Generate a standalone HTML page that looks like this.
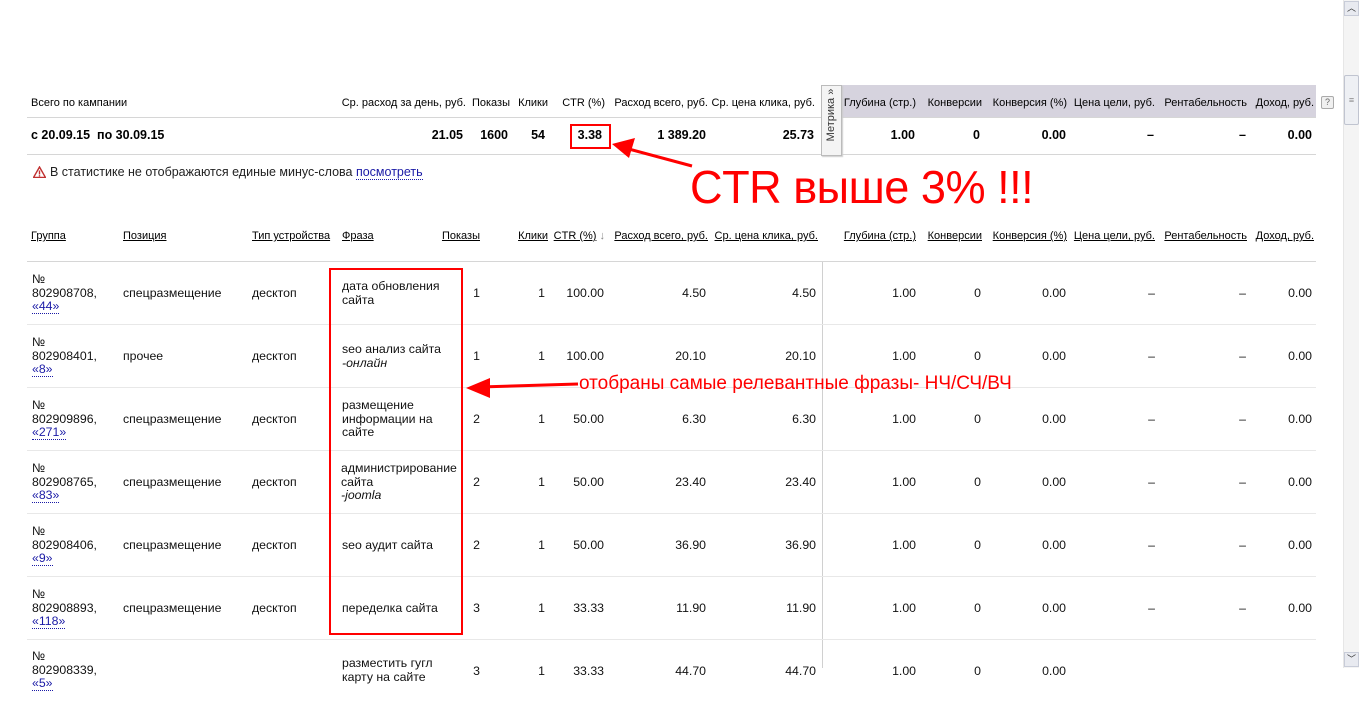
<!DOCTYPE html>
<html><head><meta charset="utf-8"><style>
*{margin:0;padding:0;box-sizing:border-box}
body{width:1359px;height:668px;overflow:hidden;background:#fff;font-family:"Liberation Sans",Arial,sans-serif;font-size:11px;color:#000;position:relative}
.a{position:absolute;white-space:nowrap}
.r{position:absolute;white-space:nowrap;text-align:right}
.hl{position:absolute;left:27px;width:1289px;height:1px;background:#d6d6d6}
.u{text-decoration:underline}
.lnk{color:#1a1aa6;border-bottom:1px dotted #1a1aa6}
.row{position:absolute;left:0;width:1359px;height:63px;font-size:12.3px;color:#111}
.row .c{position:absolute;top:0;height:63px;display:flex;align-items:center;white-space:nowrap;line-height:13.5px}
.row .n{justify-content:flex-end}
.sep{position:absolute;left:27px;width:1289px;height:1px;background:#e8e8e8;bottom:0}
</style></head><body>

<div class="a" style="left:1343px;top:0;width:16px;height:668px;background:#f4f4f4;border-left:1px solid #e6e6e6"></div>
<div class="a" style="left:1344px;top:1px;width:15px;height:15px;background:#e8eaf0;border:1px solid #c8ccd8;font-size:9px;text-align:center;line-height:13px;color:#333">︿</div>
<div class="a" style="left:1344px;top:75px;width:15px;height:50px;background:#eef0f4;border:1px solid #c0c4d0;border-radius:2px;font-size:9px;text-align:center;line-height:48px;color:#888">≡</div>
<div class="a" style="left:1344px;top:652px;width:15px;height:15px;background:#e8eaf0;border:1px solid #c8ccd8;font-size:9px;text-align:center;line-height:13px;color:#333">﹀</div>

<div class="a" style="left:838px;top:85px;width:478px;height:32px;background:#d6d3de"></div>
<div class="a" style="left:31px;top:97px">Всего по кампании</div>
<div class="r" style="right:893px;top:97px">Ср. расход за день, руб.</div>
<div class="r" style="right:849px;top:97px">Показы</div>
<div class="r" style="right:811px;top:97px">Клики</div>
<div class="r" style="right:754px;top:97px">CTR (%)</div>
<div class="r" style="right:651px;top:97px">Расход всего, руб.</div>
<div class="r" style="right:544px;top:97px">Ср. цена клика, руб.</div>
<div class="r" style="right:443px;top:97px">Глубина (стр.)</div>
<div class="r" style="right:377px;top:97px">Конверсии</div>
<div class="r" style="right:292px;top:97px">Конверсия (%)</div>
<div class="r" style="right:204px;top:97px">Цена цели, руб.</div>
<div class="r" style="right:112px;top:97px">Рентабельность</div>
<div class="r" style="right:45px;top:97px">Доход, руб.</div>
<div class="a" style="left:1321px;top:96px;width:13px;height:13px;border:1px solid #aaa;border-radius:2px;background:#f0f0f0;font-size:9px;line-height:11px;text-align:center;color:#666">?</div>
<div class="hl" style="top:117px"></div>
<div class="hl" style="top:154px"></div>
<div class="a" style="left:821px;top:85px;width:21px;height:71px;background:#f4f4f4;border:1px solid #bbb;box-shadow:1px 1px 1px #ccc"></div>
<div class="a" style="left:822px;top:150px;width:70px;transform-origin:0 0;transform:rotate(-90deg);font-size:11px;line-height:19px;text-align:center;color:#333">Метрика »</div>

<div class="a" style="left:31px;top:128px;font-weight:bold;font-size:12.5px">с 20.09.15&nbsp; по 30.09.15</div>
<div style="font-weight:bold;font-size:12.5px">
<div class="r" style="right:896px;top:128px">21.05</div>
<div class="r" style="right:851px;top:128px">1600</div>
<div class="r" style="right:814px;top:128px">54</div>
<div class="r" style="right:757px;top:128px">3.38</div>
<div class="r" style="right:653px;top:128px">1 389.20</div>
<div class="r" style="right:545px;top:128px">25.73</div>
<div class="r" style="right:444px;top:128px">1.00</div>
<div class="r" style="right:379px;top:128px">0</div>
<div class="r" style="right:293px;top:128px">0.00</div>
<div class="r" style="right:205px;top:128px">–</div>
<div class="r" style="right:113px;top:128px">–</div>
<div class="r" style="right:47px;top:128px">0.00</div>
</div>

<svg class="a" style="left:33px;top:166px" width="13" height="12"><polygon points="6.5,1 12.5,11.5 0.5,11.5" fill="#fff" stroke="#c03030" stroke-width="1.4"/><rect x="5.8" y="4.5" width="1.4" height="4" fill="#c03030"/><rect x="5.8" y="9.2" width="1.4" height="1.3" fill="#c03030"/></svg>
<div class="a" style="left:50px;top:165px;font-size:12.5px;color:#222">В статистике не отображаются единые минус-слова <span class="lnk">посмотреть</span></div>

<div class="a u" style="left:31px;top:230px">Группа</div>
<div class="a u" style="left:123px;top:230px">Позиция</div>
<div class="a u" style="left:252px;top:230px">Тип устройства</div>
<div class="a u" style="left:342px;top:230px">Фраза</div>
<div class="r u" style="right:879px;top:230px">Показы</div>
<div class="r u" style="right:811px;top:230px">Клики</div>
<div class="r" style="right:754px;top:230px"><span class="u">CTR (%)</span> <span style="color:#888">↓</span></div>
<div class="r u" style="right:651px;top:230px">Расход всего, руб.</div>
<div class="r u" style="right:541px;top:230px">Ср. цена клика, руб.</div>
<div class="r u" style="right:443px;top:230px">Глубина (стр.)</div>
<div class="r u" style="right:377px;top:230px">Конверсии</div>
<div class="r u" style="right:292px;top:230px">Конверсия (%)</div>
<div class="r u" style="right:204px;top:230px">Цена цели, руб.</div>
<div class="r u" style="right:112px;top:230px">Рентабельность</div>
<div class="r u" style="right:45px;top:230px">Доход, руб.</div>
<div class="hl" style="top:261px"></div>
<div class="a" style="left:822px;top:262px;width:1px;height:406px;background:#d0d0d0"></div>

<div class="row" style="top:262px"><div class="sep"></div>
<div class="c" style="left:32px"><div>№<br>802908708,<br><span class="lnk">«44»</span></div></div>
<div class="c" style="left:123px">спецразмещение</div><div class="c" style="left:252px">десктоп</div>
<div class="c" style="left:342px"><div>дата обновления<br>сайта</div></div>
<div class="c n" style="right:879px">1</div><div class="c n" style="right:814px">1</div><div class="c n" style="right:755px">100.00</div><div class="c n" style="right:653px">4.50</div><div class="c n" style="right:543px">4.50</div><div class="c n" style="right:443px">1.00</div><div class="c n" style="right:378px">0</div><div class="c n" style="right:293px">0.00</div><div class="c n" style="right:204px">–</div><div class="c n" style="right:113px">–</div><div class="c n" style="right:47px">0.00</div></div>

<div class="row" style="top:325px"><div class="sep"></div>
<div class="c" style="left:32px"><div>№<br>802908401,<br><span class="lnk">«8»</span></div></div>
<div class="c" style="left:123px">прочее</div><div class="c" style="left:252px">десктоп</div>
<div class="c" style="left:342px"><div>seo анализ сайта<br><i>-онлайн</i></div></div>
<div class="c n" style="right:879px">1</div><div class="c n" style="right:814px">1</div><div class="c n" style="right:755px">100.00</div><div class="c n" style="right:653px">20.10</div><div class="c n" style="right:543px">20.10</div><div class="c n" style="right:443px">1.00</div><div class="c n" style="right:378px">0</div><div class="c n" style="right:293px">0.00</div><div class="c n" style="right:204px">–</div><div class="c n" style="right:113px">–</div><div class="c n" style="right:47px">0.00</div></div>

<div class="row" style="top:388px"><div class="sep"></div>
<div class="c" style="left:32px"><div>№<br>802909896,<br><span class="lnk">«271»</span></div></div>
<div class="c" style="left:123px">спецразмещение</div><div class="c" style="left:252px">десктоп</div>
<div class="c" style="left:342px"><div>размещение<br>информации на<br>сайте</div></div>
<div class="c n" style="right:879px">2</div><div class="c n" style="right:814px">1</div><div class="c n" style="right:755px">50.00</div><div class="c n" style="right:653px">6.30</div><div class="c n" style="right:543px">6.30</div><div class="c n" style="right:443px">1.00</div><div class="c n" style="right:378px">0</div><div class="c n" style="right:293px">0.00</div><div class="c n" style="right:204px">–</div><div class="c n" style="right:113px">–</div><div class="c n" style="right:47px">0.00</div></div>

<div class="row" style="top:451px"><div class="sep"></div>
<div class="c" style="left:32px"><div>№<br>802908765,<br><span class="lnk">«83»</span></div></div>
<div class="c" style="left:123px">спецразмещение</div><div class="c" style="left:252px">десктоп</div>
<div class="c" style="left:341px"><div>администрирование<br>сайта<br><i>-joomla</i></div></div>
<div class="c n" style="right:879px">2</div><div class="c n" style="right:814px">1</div><div class="c n" style="right:755px">50.00</div><div class="c n" style="right:653px">23.40</div><div class="c n" style="right:543px">23.40</div><div class="c n" style="right:443px">1.00</div><div class="c n" style="right:378px">0</div><div class="c n" style="right:293px">0.00</div><div class="c n" style="right:204px">–</div><div class="c n" style="right:113px">–</div><div class="c n" style="right:47px">0.00</div></div>

<div class="row" style="top:514px"><div class="sep"></div>
<div class="c" style="left:32px"><div>№<br>802908406,<br><span class="lnk">«9»</span></div></div>
<div class="c" style="left:123px">спецразмещение</div><div class="c" style="left:252px">десктоп</div>
<div class="c" style="left:342px">seo аудит сайта</div>
<div class="c n" style="right:879px">2</div><div class="c n" style="right:814px">1</div><div class="c n" style="right:755px">50.00</div><div class="c n" style="right:653px">36.90</div><div class="c n" style="right:543px">36.90</div><div class="c n" style="right:443px">1.00</div><div class="c n" style="right:378px">0</div><div class="c n" style="right:293px">0.00</div><div class="c n" style="right:204px">–</div><div class="c n" style="right:113px">–</div><div class="c n" style="right:47px">0.00</div></div>

<div class="row" style="top:577px"><div class="sep"></div>
<div class="c" style="left:32px"><div>№<br>802908893,<br><span class="lnk">«118»</span></div></div>
<div class="c" style="left:123px">спецразмещение</div><div class="c" style="left:252px">десктоп</div>
<div class="c" style="left:342px">переделка сайта</div>
<div class="c n" style="right:879px">3</div><div class="c n" style="right:814px">1</div><div class="c n" style="right:755px">33.33</div><div class="c n" style="right:653px">11.90</div><div class="c n" style="right:543px">11.90</div><div class="c n" style="right:443px">1.00</div><div class="c n" style="right:378px">0</div><div class="c n" style="right:293px">0.00</div><div class="c n" style="right:204px">–</div><div class="c n" style="right:113px">–</div><div class="c n" style="right:47px">0.00</div></div>

<div class="row" style="top:640px">
<div class="c" style="left:32px;align-items:flex-start;padding-top:10px"><div>№<br>802908339,<br><span class="lnk">«5»</span></div></div>
<div class="c" style="left:342px;align-items:flex-start;padding-top:17px"><div>разместить гугл<br>карту на сайте</div></div>
<div class="c n" style="right:879px">3</div><div class="c n" style="right:814px">1</div><div class="c n" style="right:755px">33.33</div><div class="c n" style="right:653px">44.70</div><div class="c n" style="right:543px">44.70</div><div class="c n" style="right:443px">1.00</div><div class="c n" style="right:378px">0</div><div class="c n" style="right:293px">0.00</div></div>

<div class="a" style="left:570px;top:124px;width:41px;height:25px;border:2px solid #f00"></div>
<div class="a" style="left:329px;top:268px;width:134px;height:367px;border:2px solid #f00"></div>
<svg class="a" style="left:0;top:0" width="1359" height="668">
<line x1="692" y1="166" x2="625" y2="148" stroke="#f00" stroke-width="3"/>
<polygon points="612,144 635,138 629,158" fill="#f00"/>
<line x1="578" y1="384" x2="480" y2="387" stroke="#f00" stroke-width="3"/>
<polygon points="466,388 490,378 490,398" fill="#f00"/>
</svg>
<div class="a" style="left:690px;top:162px;font-size:46px;line-height:50px;color:#f00;letter-spacing:-0.5px;transform:scaleX(0.98);transform-origin:0 0">CTR выше 3% !!!</div>
<div class="a" style="left:579px;top:373px;font-size:19px;line-height:22px;color:#f00;transform:scaleX(1.0);transform-origin:0 0">отобраны самые релевантные фразы- НЧ/СЧ/ВЧ</div>
</body></html>
